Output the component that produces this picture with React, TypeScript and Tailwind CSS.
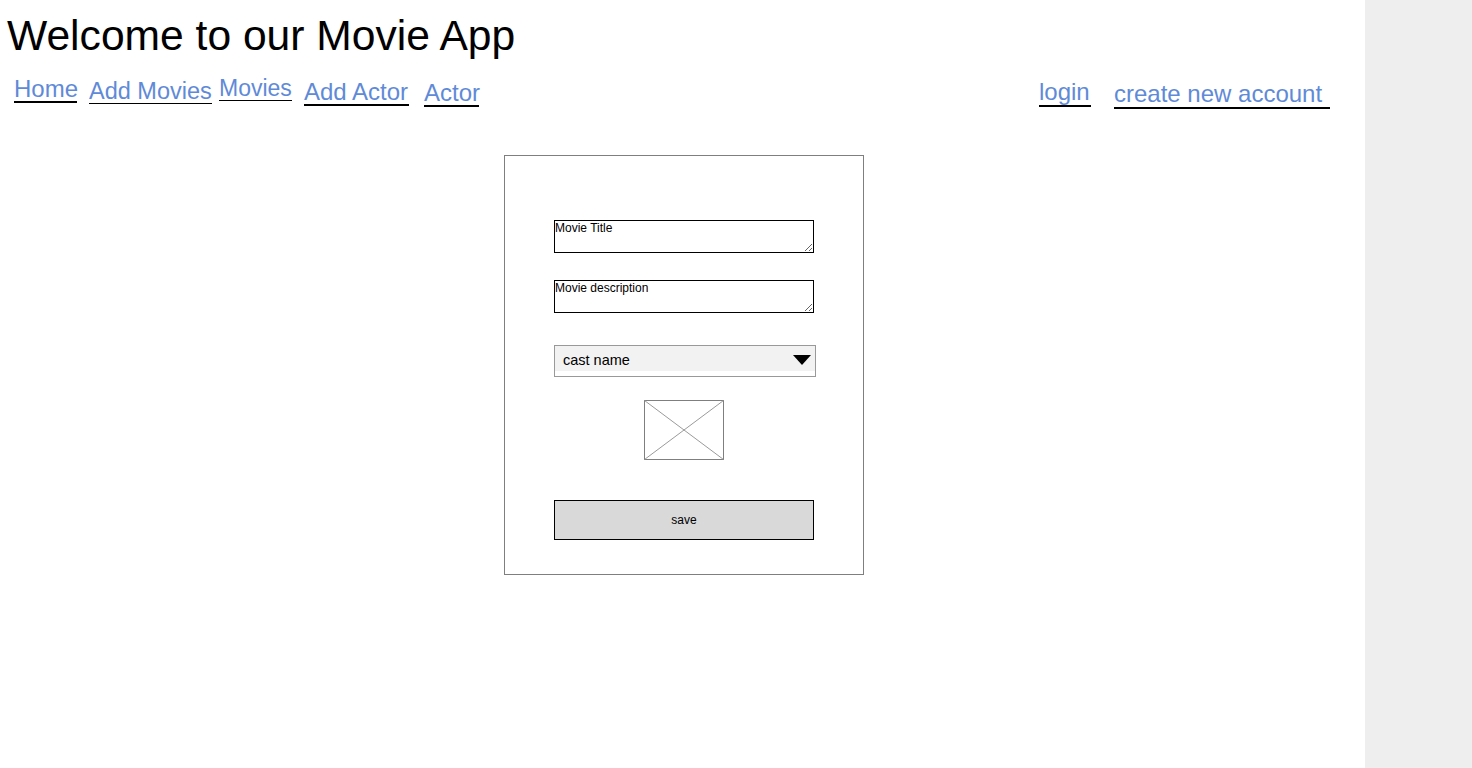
const font = { fontFamily: '"Liberation Sans", Arial, sans-serif' };

const leftLinks = [
  { label: "Home", cls: "ml-[14px] mt-[1px] w-[63px] text-[24px] border-b-2" },
  { label: "Add Movies", cls: "ml-[12px] mt-[3px] w-[123px] text-[23.5px] border-b" },
  { label: "Movies", cls: "ml-[7px] mt-0 w-[73px] text-[23px] border-b" },
  { label: "Add Actor", cls: "ml-[12px] mt-[4px] w-[105px] text-[24px] border-b-2" },
  { label: "Actor", cls: "ml-[15px] mt-[5px] w-[55px] text-[24px] border-b-2" },
];

function NavLink({ label, cls }: { label: string; cls: string }) {
  return (
    <a
      href="#"
      className={`block whitespace-nowrap leading-[24px] text-[#5f8ad8] border-black ${cls}`}
    >
      {label}
    </a>
  );
}

function ImagePlaceholder() {
  return (
    <svg width="80" height="60" viewBox="0 0 80 60" className="block">
      <rect x="0.5" y="0.5" width="79" height="59" fill="white" stroke="#7f7f7f" />
      <line x1="0.5" y1="0.5" x2="79.5" y2="59.5" stroke="#9a9a9a" strokeWidth="1" />
      <line x1="79.5" y1="0.5" x2="0.5" y2="59.5" stroke="#9a9a9a" strokeWidth="1" />
    </svg>
  );
}

export default function App() {
  return (
    <div className="flex h-[768px] bg-white text-black" style={font}>
      <div className="w-[1365px] shrink-0">
        <h1 className="pl-[7px] pt-[14px] text-[42.6px] leading-[42px] font-normal">
          Welcome to our Movie App
        </h1>

        <nav className="mt-[20px] h-[34px] flex items-start">
          {leftLinks.map((l) => (
            <NavLink key={l.label} label={l.label} cls={l.cls} />
          ))}
          <div className="ml-auto pr-[35px] flex items-start">
            <NavLink label="login" cls="mt-[4px] w-[52px] text-[24px] border-b-2 pb-[1px]" />
            <NavLink
              label="create new account"
              cls="ml-[23px] mt-[6px] w-[216px] text-[24px] border-b-2 pb-[1px]"
            />
          </div>
        </nav>

        <div className="ml-[504px] mt-[45px] w-[360px] h-[420px] border border-[#7f7f7f] pl-[49px] pt-[64px]">
          <textarea
            placeholder="Movie Title"
            className="block w-[260px] h-[33px] border border-black p-0 text-[12px] leading-[14px] placeholder:text-black outline-none"
            style={font}
          />
          <textarea
            placeholder="Movie description"
            className="block mt-[27px] w-[260px] h-[33px] border border-black p-0 text-[12px] leading-[14px] placeholder:text-black outline-none"
            style={font}
          />

          <div className="mt-[32px] w-[262px] h-[32px] border border-[#999999] bg-white">
            <div className="h-[25px] bg-[#f2f2f2] flex items-center justify-between pl-[8px] pr-[4px]">
              <span className="text-[14.5px] leading-none mt-[4px]">cast name</span>
              <svg width="18" height="11" viewBox="0 0 18 11" className="mt-[3px]">
                <polygon points="0,0 18,0 9,10" fill="black" />
              </svg>
            </div>
          </div>

          <div className="mt-[23px] w-[260px] flex justify-center">
            <ImagePlaceholder />
          </div>

          <button className="mt-[40px] block w-[260px] h-[40px] bg-[#d9d9d9] border border-black text-[12px]">
            save
          </button>
        </div>
      </div>
      <div className="flex-1 bg-[#eeeeee]" />
    </div>
  );
}
